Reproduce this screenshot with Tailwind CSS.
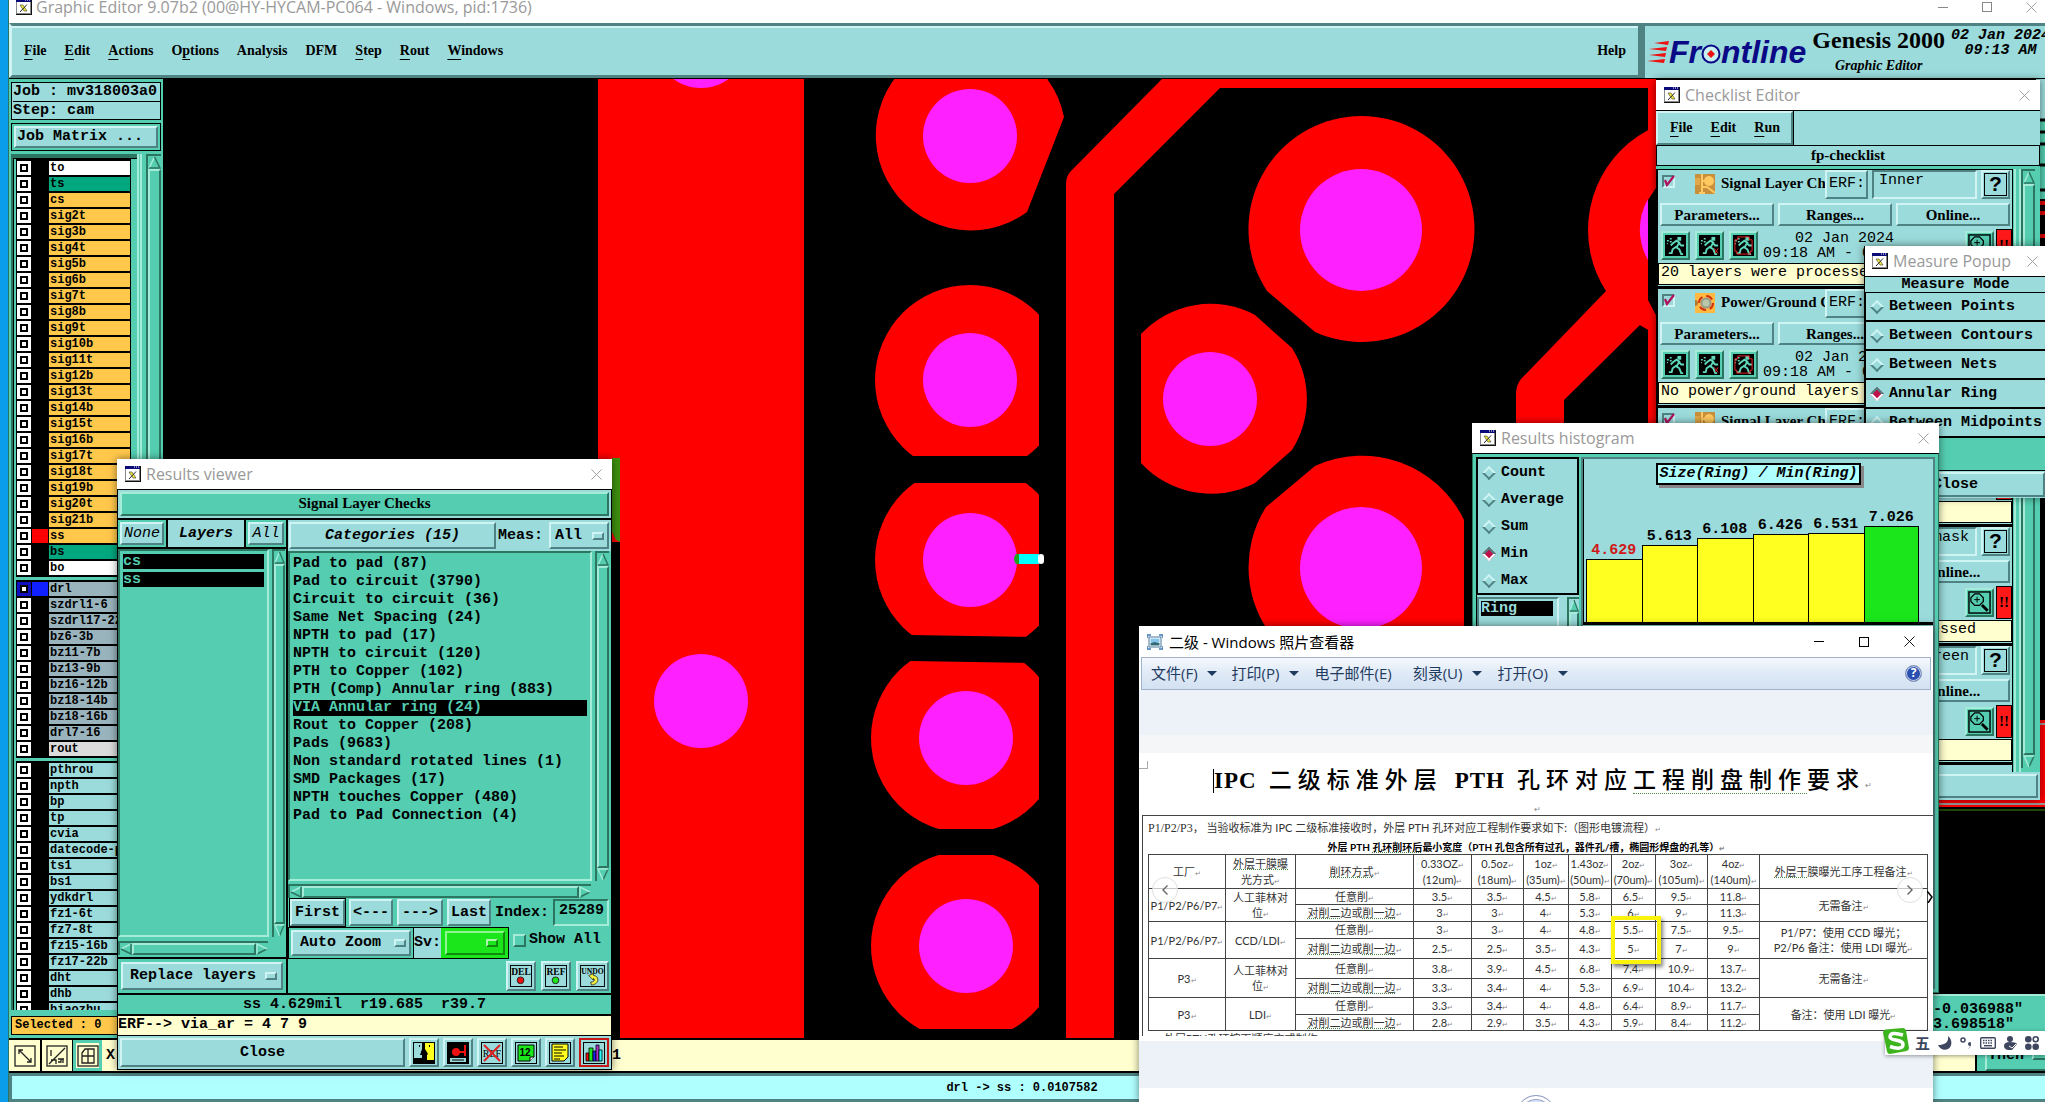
<!DOCTYPE html>
<html lang="zh-CN">
<head>
    <meta charset="UTF-8">
    <meta name="viewport" content="width=device-width, initial-scale=1.0">
    <title>Graphic Editor 9.07b2</title>
    <script src="https://cdn.jsdelivr.net/npm/@tailwindcss/browser@4"></script>
</head>
<body class="relative h-screen w-full overflow-hidden bg-[#0a9eea] text-black font-['Liberation_Mono','Noto_Sans_CJK_SC',monospace] text-[15px] leading-[18px]">

    <!-- Shared icons -->
    <svg class="hidden">
        <symbol id="x-app" viewBox="0 0 16 16">
            <rect width="16" height="16" fill="#111"/><rect x="0" y="0" width="15" height="15" fill="#888"/>
            <rect x="1" y="1" width="13" height="13" fill="#fff"/><rect x="0" y="0" width="15" height="3" fill="#0a0a78"/>
            <path d="M9 1h1M11 1h1M13 1h1" stroke="#fff"/>
            <path d="M4 6h3l4 6H8z" fill="#f5ee3a" stroke="#333" stroke-width=".6"/><path d="M11 5.500L4 13" stroke="#222"/>
        </symbol>
        <symbol id="close" viewBox="0 0 12 12"><path d="M.5.5l11 11M11.500.5l-11 11" stroke="currentColor" fill="none"/></symbol>
        <symbol id="runner" viewBox="0 0 22 22">
            <path d="M13 2h4v4h-4z" fill="#5fd8bb"/>
            <path d="M8 9l4-3 3 2-3 5 3 2 2 5h2M12 12l-4 3-1 4H4M14 8l3 3h3M9 8l-3 3" fill="none" stroke="#5fd8bb" stroke-width="2"/>
            <path d="M2 6h2M5 4h2M5 7h2M2 9h1" stroke="#5fd8bb" stroke-width="1.500"/>
        </symbol>
        <symbol id="magnify" viewBox="0 0 24 24">
            <rect x="1" y="1" width="22" height="22" fill="none" stroke="#000" stroke-width="1.500"/>
            <path d="M7 3h5l4 4v4l-4 4H7l-4-4V7z" fill="none" stroke="#000" stroke-width="1.300"/>
            <path d="M6.500 9h6M9.500 6v6" stroke="#000"/><path d="M14.500 14.500l6 6" stroke="#000" stroke-width="3"/>
        </symbol>
    </svg>

    <div class="ml-2 flex h-screen flex-col border-l border-[#2c7560]">
        <!-- Title bar -->
        <header class="flex h-[23px] shrink-0 items-center justify-between bg-white pb-[9px] pl-[7px] pr-[8px] text-[#999]">
            <div class="flex items-center gap-1">
                <svg class="size-4"><use href="#x-app"/></svg>
                <h1 class="whitespace-nowrap font-['Open_Sans',sans-serif] text-base leading-5">Graphic Editor 9.07b2 (00@HY-HYCAM-PC064 - Windows, pid:1736)</h1>
            </div>
            <div class="flex items-center gap-[34px]">
                <button aria-label="Minimize" class="h-px w-[10px] bg-[#888]"></button>
                <button aria-label="Maximize" class="size-[10px] border border-[#888]"></button>
                <button aria-label="Close"><svg class="size-[11px]"><use href="#close"/></svg></button>
            </div>
        </header>

        <!-- Menu bar -->
        <div class="flex h-14 shrink-0 border-b border-black bg-[#9bdbdb] font-['Liberation_Serif',serif] font-bold">
            <nav class="flex flex-1 items-center gap-[18px] border-[3px] border-b-[#4f8282] border-l-[#d0f4f4] border-r-[#4f8282] border-t-[#4f8282] px-[12px] text-sm shadow-[inset_0_2px_0_#d0f4f4]">
                <button><u class="underline-offset-4">F</u>ile</button>
                <button><u class="underline-offset-4">E</u>dit</button>
                <button><u class="underline-offset-4">A</u>ctions</button>
                <button>O<u class="underline-offset-4">p</u>tions</button>
                <button>Analysis</button>
                <button>DFM</button>
                <button><u class="underline-offset-4">S</u>tep</button>
                <button><u class="underline-offset-4">R</u>out</button>
                <button><u class="underline-offset-4">W</u>indows</button>
                <button class="ml-auto">Help</button>
            </nav>
            <div class="flex w-[404px] shrink-0 gap-[6px] overflow-hidden border-l-4 border-t-[3px] border-[#4f8282] pl-[2px]">
                <div class="flex h-full shrink-0 items-center">
                    <svg class="h-7 w-[22px]" viewBox="0 0 22 28">
                        <g fill="#e11"><path d="M7 5l15-2-1 4zM2 11l18-2-1 4zM2 17l17-2-1 4zM0 23l18-2-1 4z"/></g>
                    </svg>
                    <div class="flex items-center font-['Liberation_Sans',sans-serif] text-[32px] italic leading-8 text-[#0a0a86]" aria-label="Frontline">
                        <span>Fr</span>
                        <svg class="mt-1 size-5" viewBox="0 0 20 20"><circle cx="10" cy="10" r="8.500" fill="#c8f2f2" stroke="#0a0a86" stroke-width="2"/><path d="M10 6l4 4-4 4-4-4z" fill="#e11"/></svg>
                        <span>ntline</span>
                    </div>
                </div>
                <div class="shrink-0 text-center">
                    <div class="text-2xl leading-7">Genesis 2000</div>
                    <div class="pt-1 text-sm italic leading-4">Graphic Editor</div>
                </div>
                <div class="shrink-0 pt-[2px] text-center font-['Liberation_Mono',monospace] text-[15px] italic leading-[15px]">
                    <div>02 Jan 2024</div>
                    <div>09:13 AM</div>
                </div>
            </div>
        </div>

        <div class="flex min-h-0 flex-1">
            <!-- Layer list -->
            <aside class="flex w-[154px] shrink-0 flex-col overflow-hidden bg-[#54cdb0] px-[2px] pt-[3px] font-bold">
                <div class="shrink-0 border border-black bg-[#9bdbdb] pl-px text-[15px]">
                    <div class="whitespace-nowrap border-b border-black leading-[18px]">Job : mv318003a0</div>
                    <div class="leading-[17px]">Step: cam</div>
                </div>
                <div class="mt-[3px] shrink-0 border border-black p-[2px]">
                    <button class="w-full border-2 border-b-[#4f8282] border-l-[#d0f4f4] border-r-[#4f8282] border-t-[#d0f4f4] bg-[#9bdbdb] pl-px text-left leading-[18px]">Job Matrix ...</button>
                </div>
                <div class="mt-[3px] flex min-h-0 flex-1 justify-between">
                    <div class="min-h-0 flex-1 overflow-hidden border-l-2 border-t-4 border-[#2c7560]">
                        <div class="border-l border-t border-black pl-[2px]">
                            <div id="layers" class="w-[115px]"></div>
                        </div>
                    </div>
                    <div class="w-[5px] border-x-2 border-[#a5ecd8] bg-[#54cdb0]"></div>
                    <div data-vscroll class="ml-1 flex w-[15px] flex-col"></div>
                </div>
                <div class="mt-[6px] mb-[3px] h-[19px] shrink-0 border border-black bg-[#ffc84b] pl-[3px] text-[12px] leading-[17px]">Selected : 0</div>
            </aside>

            <!-- Board canvas -->
            <main class="relative min-w-0 flex-1 bg-black">
                <svg class="h-full w-full" viewBox="163 79 1882 959" preserveAspectRatio="xMinYMin slice">
                    <defs>
                        <clipPath id="p2"><rect x="860" y="280" width="179" height="176"/></clipPath>
                        <clipPath id="p3"><path d="M860 483H1039V637L910 635H860z"/></clipPath>
                        <clipPath id="p4"><path d="M860 661H911L1039 663V829H860z"/></clipPath>
                        <clipPath id="p5"><rect x="860" y="855" width="179" height="174"/></clipPath>
                    </defs>
                    <g fill="#f00">
                        <rect x="598" y="79" width="206" height="959"/>
                        <path d="M1064 117A95 95 0 1 0 1027 212z"/>
                        <circle cx="970" cy="380" r="95" clip-path="url(#p2)"/>
                        <circle cx="970" cy="560" r="95" clip-path="url(#p3)"/>
                        <circle cx="966" cy="738" r="95" clip-path="url(#p4)"/>
                        <circle cx="966" cy="946" r="95" clip-path="url(#p5)"/>
                        <path d="M1162 79L1071 171Q1066 176 1066 184V1038H1114V194L1220 88H1648V423H1656V79z"/>
                        <path d="M1267 291A113 113 0 1 1 1315 332z"/>
                        <path d="M1141 334A95 95 0 0 1 1255 315L1292 348A95 95 0 0 1 1292 450L1255 483A95 95 0 0 1 1141 463z"/>
                        <path d="M1315 466A113 113 0 0 1 1464 520V640H1275A113 113 0 0 1 1266 507z"/>
                        <circle cx="1701" cy="230" r="113"/>
                        <path d="M1606 291L1521 379Q1516 385 1516 394V430H1564V400L1640 325L1660 335V270z"/>
                    </g>
                    <path d="M1656 188L1648 200V300L1656 315z" fill="#000"/>
                    <g fill="#ff20ff">
                        <circle cx="701" cy="41" r="47"/><circle cx="701" cy="701" r="47"/>
                        <circle cx="970" cy="136" r="47"/><circle cx="970" cy="380" r="47"/>
                        <circle cx="970" cy="560" r="47"/><circle cx="966" cy="738" r="47"/>
                        <circle cx="966" cy="946" r="47"/><circle cx="1210" cy="399" r="47"/>
                        <circle cx="1361" cy="230" r="61"/><circle cx="1361" cy="568" r="61"/>
                        <path d="M1648 199A61 61 0 0 0 1648 260z"/>
                    </g>
                    <path d="M1016 554h6v10h-6q-4-5 0-10z" fill="#1fa31f"/>
                    <rect x="1019" y="554" width="20" height="10" fill="#0ff"/>
                    <rect x="1038" y="554" width="6" height="10" rx="3" fill="#fff"/>
                    <path d="M612 458h8v84l-4-2-4-8z" fill="#3f8f0f"/><path d="M604 542h16v496h-16z" fill="#000"/>
                    <rect x="2036" y="79" width="9" height="40" fill="#9bdbdb"/>
                    <rect x="2036" y="119" width="9" height="80" fill="#54cdb0"/>
                    <path d="M2036 120h9M2036 132h9M2036 144h9M2036 165h9M2036 190h9" stroke="#000" stroke-width="3"/>
                    <path d="M2036 203h9M2036 213h9M2036 236h9" stroke="#d00" stroke-width="4"/>
                    <rect x="1930" y="720" width="115" height="87" fill="#f00"/>
                    <path d="M1930 724h115M1930 804h115" stroke="#999" stroke-width="2"/>
                    <path d="M1930 810h115" stroke="#3f8f0f"/>
                </svg>
                <div class="absolute bottom-0 right-0 h-11 w-[120px] border-t-2 border-[#a5ecd8] bg-[#54cdb0] pt-[6px] pl-[8px] font-bold leading-[15px]">
                    <div>-0.036988"</div>
                    <div>3.698518"</div>
                </div>
            </main>
        </div>

        <!-- Bottom toolbar -->
        <div class="flex h-[35px] shrink-0 items-stretch border-y-2 border-black bg-[#ffffcf] font-bold">
            <button aria-label="Zoom box" class="flex w-[33px] items-center justify-center border-r-2 border-black">
                <svg class="size-6" viewBox="0 0 24 24" fill="none" stroke="#222" stroke-width="1.300"><rect x="2" y="2" width="20" height="20"/><path d="M6 6l12 12M6 10V6h4M18 14v4h-4"/></svg>
            </button>
            <button aria-label="Scale" class="flex w-[31px] items-center justify-center border-r border-black">
                <svg class="size-6" viewBox="0 0 24 24" fill="none" stroke="#222" stroke-width="1.300"><rect x="2" y="2" width="20" height="20"/><path d="M4 20L20 4M6 6v6M6 16h5v4M13 15h6M13 18h3v-3M18 15v4"/></svg>
            </button>
            <button aria-label="Grid" class="flex w-[29px] items-center justify-center border-[3px] border-[#54cdb0]">
                <svg class="size-6 shrink-0" viewBox="0 0 24 24" fill="none" stroke="#222" stroke-width="1.300"><rect x="2" y="2" width="20" height="20"/><path d="M6 9l3-4h9v14H6zM6 12h12M12 5v14"/></svg>
            </button>
            <label for="xin" class="self-center pl-1">X</label>
            <input id="xin" class="w-[506px] bg-transparent text-right" value="11">
            <div class="ml-auto flex">
                <div class="w-[10px] border-l-2 border-black bg-[#54cdb0]"></div>
                <button class="flex w-[60px] items-center gap-2 border-2 border-r-0 border-b-[#2c7560] border-l-[#a5ecd8] border-t-[#a5ecd8] bg-[#54cdb0] pl-px">Then <span class="h-2 w-4 shrink-0 border-2 border-b-[#2c7560] border-r-[#2c7560] border-l-[#a5ecd8] border-t-[#a5ecd8]"></span></button>
            </div>
        </div>
        <div class="h-[29px] shrink-0 border-[3px] border-r-0 border-t-[#4f8282] border-b-[#4f8282] border-l-[#4f8282] bg-[#b0ffff] pr-[13px] text-[12px] font-bold leading-6">
            <div class="text-center">drl -&gt; ss : 0.0107582</div>
        </div>
    </div>

    <!-- Checklist Editor -->
    <section class="absolute left-[1656px] top-20 flex h-[720px] w-96 flex-col bg-[#9bdbdb] shadow-[0_0_8px_rgba(0,0,0,0.5)]">
        <header class="flex h-[30px] shrink-0 items-center gap-[5px] bg-white pl-2 pr-[10px] text-[#999]">
            <svg class="size-4"><use href="#x-app"/></svg>
            <h2 class="flex-1 font-['Open_Sans',sans-serif] text-base leading-5">Checklist Editor</h2>
            <button aria-label="Close"><svg class="size-[11px]"><use href="#close"/></svg></button>
        </header>
        <div class="h-9 shrink-0 border-b border-t border-black font-['Liberation_Serif',serif] text-sm font-bold">
            <nav class="flex h-[34px] w-[137px] items-center gap-[18px] border-2 border-b-[#4f8282] border-l-[#d0f4f4] border-r-[#4f8282] border-t-[#d0f4f4] pl-3 shadow-[1px_0_0_#000]">
                <button><u class="underline-offset-4">F</u>ile</button>
                <button><u class="underline-offset-4">E</u>dit</button>
                <button><u class="underline-offset-4">R</u>un</button>
            </nav>
        </div>
        <div class="h-5 shrink-0 border border-t-0 border-black text-center font-['Liberation_Serif',serif] text-[15px] font-bold leading-[18px]">fp-checklist</div>
        <div class="flex min-h-0 flex-1 bg-[#54cdb0] pt-[3px]">
            <div id="checks" class="w-[357px] overflow-hidden border-l-2 border-r border-t border-black bg-[#9bdbdb]"></div>
            <div class="ml-px w-[7px] border-x-2 border-[#a5ecd8]"></div>
            <div data-vscroll class="mb-1 flex w-[14px] flex-col"></div>
        </div>
        <button class="m-[2px] h-6 shrink-0 border-2 border-b-[#4f8282] border-l-[#d0f4f4] border-r-[#4f8282] border-t-[#d0f4f4] font-bold" aria-label="Close checklist"></button>
    </section>

    <!-- Measure Popup -->
    <section class="absolute left-[1864px] top-[246px] w-[182px] border-l border-black bg-[#9bdbdb] font-bold shadow-[0_0_8px_rgba(0,0,0,0.5)]">
        <header class="flex h-[30px] items-center gap-[5px] bg-white pl-[7px] pr-2 font-normal text-[#999]">
            <svg class="size-4"><use href="#x-app"/></svg>
            <h2 class="flex-1 whitespace-nowrap font-['Open_Sans',sans-serif] text-base leading-5">Measure Popup</h2>
            <button aria-label="Close"><svg class="size-[11px]"><use href="#close"/></svg></button>
        </header>
        <div class="h-[17px] border-b border-t border-black text-center leading-4">Measure Mode</div>
        <div id="modes" class="border-l border-black"></div>
        <div class="h-8 bg-[#54cdb0]"></div>
        <div class="border-t border-black p-[1px]"><button class="h-[25px] w-full border-2 border-b-[#4f8282] border-l-[#d0f4f4] border-r-[#4f8282] border-t-[#d0f4f4]">Close</button></div>
    </section>

    <!-- Results histogram -->
    <section class="absolute left-[1472px] top-[423px] flex h-[570px] w-[467px] flex-col bg-[#54cdb0] shadow-[0_0_8px_rgba(0,0,0,0.5)]">
        <header class="flex h-[30px] shrink-0 items-center gap-[5px] bg-white pl-2 pr-[10px] text-[#999]">
            <svg class="size-4"><use href="#x-app"/></svg>
            <h2 class="flex-1 font-['Open_Sans',sans-serif] text-base leading-5">Results histogram</h2>
            <button aria-label="Close"><svg class="size-[11px]"><use href="#close"/></svg></button>
        </header>
        <div class="flex min-h-0 flex-1 gap-[2px] border border-t-black border-[#2c7560] p-[3px] font-bold">
            <div class="flex w-[103px] flex-col bg-[#9bdbdb]">
                <div id="stats" class="h-[138px] border-2 border-black"></div>
                <div class="flex flex-1 justify-between border-l border-black pt-[2px]">
                    <div class="w-[82px] border-2 border-b-[#d0f4f4] border-l-[#4f8282] border-r-[#d0f4f4] border-t-[#4f8282] p-[2px] pr-1">
                        <div class="h-[15px] bg-black text-[#9bdbdb] leading-[15px]">Ring</div>
                    </div>
                    <div data-vscroll class="flex w-3 flex-col"></div>
                </div>
            </div>
            <div class="flex-1 border-2 border-[#4f8282] bg-[#9bdbdb]">
                <div class="flex h-[166px] flex-col justify-between border-b-[3px] border-l border-black">
                    <div class="mx-auto mt-1 h-[22px] w-[205px] border-2 border-black bg-[#b0ffff] text-center italic shadow-[3px_3px_0_#888]">Size(Ring) / Min(Ring)</div>
                    <div id="bars" class="flex items-end pl-[2px] pr-[14px]"></div>
                </div>
            </div>
        </div>
    </section>

    <!-- Results viewer -->
    <section class="absolute left-[117px] top-[459px] w-[495px] bg-[#54cdb0] shadow-[0_0_8px_rgba(0,0,0,0.5)]">
        <header class="flex h-[30px] items-center gap-[5px] bg-white pl-2 pr-[10px] text-[#999]">
            <svg class="size-4"><use href="#x-app"/></svg>
            <h2 class="flex-1 font-['Open_Sans',sans-serif] text-base leading-5">Results viewer</h2>
            <button aria-label="Close"><svg class="size-[11px]"><use href="#close"/></svg></button>
        </header>
        <div class="border border-black">
            <div class="border-b-2 border-black bg-[#9bdbdb] p-[2px]">
                <div class="h-6 border-2 border-b-[#2c7560] border-l-[#a5ecd8] border-r-[#2c7560] border-t-[#a5ecd8] bg-[#54cdb0] text-center font-['Liberation_Serif',serif] text-[15px] font-bold leading-[18px]">Signal Layer Checks</div>
            </div>
            <div class="flex border-b-2 border-black">
                <div class="flex w-[170px] shrink-0 flex-col border-r-2 border-black">
                    <div class="flex h-[29px] items-stretch border-b-2 border-black italic">
                        <button class="m-[2px] w-11 border-2 border-b-[#4f8282] border-l-[#d0f4f4] border-r-[#4f8282] border-t-[#d0f4f4] bg-[#9bdbdb]">None</button>
                        <div class="flex-1 border-x-2 border-black bg-[#9bdbdb] text-center font-bold leading-[27px]">Layers</div>
                        <button class="m-[2px] w-9 border-2 border-b-[#4f8282] border-l-[#d0f4f4] border-r-[#4f8282] border-t-[#d0f4f4] bg-[#9bdbdb]">All</button>
                    </div>
                    <div class="flex h-[388px] justify-between pr-px">
                        <ul class="w-[151px] border-2 border-b-[#a5ecd8] border-l-[#2c7560] border-r-[#a5ecd8] border-t-[#2c7560] p-[3px] font-bold text-[#54cdb0]">
                            <li class="mb-[3px] h-[15px] bg-black leading-[15px]">cs</li>
                            <li class="h-[15px] bg-black leading-[15px]">ss</li>
                        </ul>
                        <div data-vscroll class="flex w-[13px] flex-col"></div>
                    </div>
                    <div data-hscroll class="mb-[2px] mt-1 flex h-[14px] w-[150px]"></div>
                    <div class="flex-1 border-t-2 border-black p-[3px]">
                        <div class="relative h-7">
                            <select aria-label="Replace layers" class="h-full w-full appearance-none border-2 border-b-[#4f8282] border-l-[#d0f4f4] border-r-[#4f8282] border-t-[#d0f4f4] bg-[#9bdbdb] pl-[7px] font-bold"><option>Replace layers</option></select>
                            <span class="pointer-events-none absolute right-[6px] top-[10px] h-2 w-3 border-2 border-b-[#4f8282] border-l-[#d0f4f4] border-r-[#4f8282] border-t-[#d0f4f4]"></span>
                        </div>
                    </div>
                </div>
                <div class="flex min-w-0 flex-1 flex-col font-bold">
                    <div class="flex h-[31px] items-center bg-[#9bdbdb] pl-px pr-[2px]">
                        <div class="h-[27px] w-[207px] border-2 border-b-[#4f8282] border-l-[#d0f4f4] border-r-[#4f8282] border-t-[#d0f4f4] text-center italic leading-[23px]">Categories (15)</div>
                        <label for="meas" class="pl-[2px]">Meas:</label>
                        <div class="relative ml-auto h-[27px] w-[60px]">
                            <select id="meas" class="h-full w-full appearance-none border-2 border-b-[#4f8282] border-l-[#d0f4f4] border-r-[#4f8282] border-t-[#d0f4f4] pl-1 font-bold"><option>All</option></select>
                            <span class="pointer-events-none absolute right-[5px] top-[10px] h-2 w-3 border-2 border-b-[#4f8282] border-l-[#d0f4f4] border-r-[#4f8282] border-t-[#d0f4f4]"></span>
                        </div>
                    </div>
                    <div class="flex h-[330px] justify-between pr-[2px]">
                        <ul id="categories" class="w-[304px] border-2 border-b-[#a5ecd8] border-l-[#2c7560] border-r-[#a5ecd8] border-t-[#2c7560] px-[3px] pt-[2px]"></ul>
                        <div data-vscroll class="flex w-[14px] flex-col"></div>
                    </div>
                    <div data-hscroll class="mb-px mt-[3px] flex h-[14px] w-[303px]"></div>
                    <div class="flex h-[27px] items-stretch gap-1 pl-[2px] pr-[2px]">
                        <button class="border-2 border-b-[#4f8282] border-l-[#d0f4f4] border-r-[#4f8282] border-t-[#d0f4f4] bg-[#9bdbdb] px-[3px] font-bold ring-1 ring-black">First</button>
                        <button class="border-2 border-b-[#4f8282] border-l-[#d0f4f4] border-r-[#4f8282] border-t-[#d0f4f4] bg-[#9bdbdb] px-[2px]">&lt;---</button>
                        <button class="border-2 border-b-[#4f8282] border-l-[#d0f4f4] border-r-[#4f8282] border-t-[#d0f4f4] bg-[#9bdbdb] px-[3px]">---&gt;</button>
                        <button class="border-2 border-b-[#4f8282] border-l-[#d0f4f4] border-r-[#4f8282] border-t-[#d0f4f4] bg-[#9bdbdb] px-[2px]">Last</button>
                        <label for="idx" class="self-center">Index:</label>
                        <input id="idx" class="min-w-0 flex-1 border-2 border-b-[#a5ecd8] border-l-[#2c7560] border-r-[#a5ecd8] border-t-[#2c7560] pb-1 pl-1" value="25289">
                    </div>
                    <div class="mt-px flex h-8 items-start">
                        <div class="flex h-8 border border-black">
                            <div class="relative m-[2px] w-[120px]">
                                <select aria-label="Zoom mode" class="h-full w-full appearance-none border-2 border-b-[#4f8282] border-l-[#d0f4f4] border-r-[#4f8282] border-t-[#d0f4f4] bg-[#9bdbdb] pl-[7px] font-bold"><option>Auto Zoom</option></select>
                                <span class="pointer-events-none absolute right-[5px] top-[9px] h-2 w-3 border-2 border-b-[#4f8282] border-l-[#d0f4f4] border-r-[#4f8282] border-t-[#d0f4f4]"></span>
                            </div>
                            <label for="sv" class="border-l border-black bg-[#9bdbdb] leading-[30px]">Sv:</label>
                            <div class="relative w-[67px] bg-[#1be61b] p-[3px] pl-1">
                                <select id="sv" class="h-full w-full appearance-none border-2 border-b-[#0f8a0f] border-l-[#8ff58f] border-r-[#0f8a0f] border-t-[#8ff58f]"><option></option></select>
                                <span class="pointer-events-none absolute right-[10px] top-[11px] h-2 w-3 border-2 border-b-[#0f8a0f] border-l-[#aff5af] border-r-[#0f8a0f] border-t-[#aff5af]"></span>
                            </div>
                        </div>
                        <label class="ml-1 flex items-center gap-[3px] whitespace-nowrap pt-1"><input type="checkbox" class="size-[13px] appearance-none border-2 border-b-[#2c7560] border-l-[#a5ecd8] border-r-[#2c7560] border-t-[#a5ecd8]">Show All</label>
                    </div>
                    <div class="flex h-[34px] items-center justify-end gap-[5px] pr-[2px]">
                        <button aria-label="DEL" class="border-2 border-b-[#4f8282] border-l-[#d0f4f4] border-r-[#4f8282] border-t-[#d0f4f4] bg-[#9bdbdb] p-[2px]">
                            <svg class="size-[22px]" viewBox="0 0 23 23"><rect x=".5" y=".5" width="22" height="22" fill="none" stroke="#000"/><text x="11.500" y="10" text-anchor="middle" font-size="10" font-family="Liberation Serif">DEL</text><circle cx="11" cy="16" r="3.500" fill="#e11" stroke="#222"/></svg>
                        </button>
                        <button aria-label="REF" class="border-2 border-b-[#4f8282] border-l-[#d0f4f4] border-r-[#4f8282] border-t-[#d0f4f4] bg-[#9bdbdb] p-[2px]">
                            <svg class="size-[22px]" viewBox="0 0 23 23"><rect x=".5" y=".5" width="22" height="22" fill="none" stroke="#000"/><text x="11.500" y="10" text-anchor="middle" font-size="10" font-family="Liberation Serif">REF</text><circle cx="11" cy="16" r="3.500" fill="#1be61b" stroke="#222"/></svg>
                        </button>
                        <button aria-label="UNDO" class="border-2 border-b-[#4f8282] border-l-[#d0f4f4] border-r-[#4f8282] border-t-[#d0f4f4] bg-[#9bdbdb] p-[2px]">
                            <svg class="h-[22px] w-[25px]" viewBox="0 0 26 23"><rect x=".5" y=".5" width="25" height="22" fill="none" stroke="#000"/><text x="13" y="9" text-anchor="middle" font-size="8" font-family="Liberation Serif">UNDO</text><path d="M9 11l5-2v2c6 0 7 9-2 10l-1-3c4 0 5-3 3-4v2z" fill="#f5ee3a" stroke="#222" stroke-width=".8"/></svg>
                        </button>
                    </div>
                </div>
            </div>
            <div class="h-[21px] whitespace-pre border-b-2 border-black text-center font-bold leading-[19px]">ss 4.629mil  r19.685  r39.7</div>
            <div class="h-5 border-b border-black bg-[#ffffcf] font-bold">ERF--&gt; via_ar = 4 7 9</div>
            <div class="flex h-[33px] items-stretch gap-1 bg-[#9bdbdb] p-[2px]">
                <button class="flex-1 border-2 border-b-[#4f8282] border-l-[#d0f4f4] border-r-[#4f8282] border-t-[#d0f4f4] font-bold">Close</button>
                <button aria-label="Compare" class="border-2 border-b-[#4f8282] border-l-[#d0f4f4] border-r-[#4f8282] border-t-[#d0f4f4] p-[2px]">
                    <svg class="size-[22px]" viewBox="0 0 22 22"><rect width="22" height="22"/><path d="M1 1h8v6l-2 6h2v3H1z" fill="#9bdbdb"/><path d="M12 1h9v17h-7v-5l1-1-3-5z" fill="#ffff20"/><path d="M6 4h1M16 4h1" stroke="#000" stroke-width="2"/></svg>
                </button>
                <button aria-label="Snapshot" class="border-2 border-b-[#4f8282] border-l-[#d0f4f4] border-r-[#4f8282] border-t-[#d0f4f4] p-[2px]">
                    <svg class="size-[22px]" viewBox="0 0 22 22"><rect width="22" height="22"/><path d="M3 16h16v4H3z" fill="#9bdbdb"/><path d="M5 18h12" stroke="#000"/><circle cx="9" cy="10" r="4" fill="#e11"/><path d="M12 10h5M18 3v11" stroke="#e11" stroke-width="2"/></svg>
                </button>
                <button aria-label="Remove reference" class="border-2 border-b-[#4f8282] border-l-[#d0f4f4] border-r-[#4f8282] border-t-[#d0f4f4] p-[2px]">
                    <svg class="size-[22px]" viewBox="0 0 22 22"><rect x=".5" y=".5" width="21" height="21" fill="none" stroke="#000"/><text x="11" y="15" text-anchor="middle" font-size="10" font-family="Liberation Serif">REF</text><path d="M3 3l16 16M19 3L3 19" stroke="#d22" stroke-width="2"/></svg>
                </button>
                <button aria-label="Numbers" class="border-2 border-b-[#4f8282] border-l-[#d0f4f4] border-r-[#4f8282] border-t-[#d0f4f4] p-[2px]">
                    <svg class="size-[22px]" viewBox="0 0 22 22"><rect x=".5" y=".5" width="21" height="21" fill="none" stroke="#000"/><path d="M3 3h16v12l-4 4H3z" fill="#1be61b" stroke="#000"/><path d="M15 19v-4h4" fill="#fff" stroke="#000"/><text x="10" y="14" text-anchor="middle" font-size="10" font-weight="bold" font-family="Liberation Sans">12</text></svg>
                </button>
                <button aria-label="Report" class="border-2 border-b-[#4f8282] border-l-[#d0f4f4] border-r-[#4f8282] border-t-[#d0f4f4] p-[2px]">
                    <svg class="size-[22px]" viewBox="0 0 22 22"><rect x=".5" y=".5" width="21" height="21" fill="none" stroke="#000"/><path d="M3 2h16v13l-4 4H3z" fill="#ffff20" stroke="#000"/><path d="M5 5h9M5 8h12M5 11h8M5 14h10M5 17h6" stroke="#000"/></svg>
                </button>
                <button aria-label="Histogram" class="border-2 border-[#c81818] p-[2px]">
                    <svg class="size-[22px]" viewBox="0 0 22 22"><rect x=".5" y=".5" width="21" height="21" fill="#9bdbdb" stroke="#000"/><g stroke="#000" stroke-width=".8"><path d="M3 11h3v8H3z" fill="#e11"/><path d="M6 6h4v13H6z" fill="#1be61b"/><path d="M10 9h3v10h-3z" fill="#22f"/><path d="M13 3h3v16h-3z" fill="#b030d0"/><path d="M16 8h3v11h-3z" fill="#2ff"/></g></svg>
                </button>
            </div>
        </div>
    </section>

    <!-- Photo viewer -->
    <section class="absolute bottom-0 left-[1139px] top-[626px] flex w-[794px] flex-col overflow-hidden bg-white font-['Open_Sans','Noto_Sans_CJK_SC',sans-serif] shadow-[0_0_8px_rgba(0,0,0,0.5)]">
        <header class="flex h-[31px] shrink-0 items-center gap-[6px] pl-2 pr-[18px]">
            <svg class="size-4" viewBox="0 0 16 16"><path d="M0 4V1h4M12 1h4v3M0 12v3h4M12 15h4v-3" fill="none" stroke="#3c7ab4" stroke-width="1.500"/><rect x="2" y="3" width="12" height="10" fill="#fff" stroke="#48759a"/><rect x="3.500" y="4.500" width="9" height="4" fill="#86c5ee"/><path d="M3.500 11.500V9l4-1 5 1v2.500z" fill="#2e6a78"/></svg>
            <h2 class="flex-1 text-[15px]">二级 - Windows 照片查看器</h2>
            <div class="flex items-center gap-[35px]">
                <button aria-label="Minimize" class="h-px w-[10px] bg-black"></button>
                <button aria-label="Maximize" class="size-[10px] border border-black"></button>
                <button aria-label="Close"><svg class="size-[11px]"><use href="#close"/></svg></button>
            </div>
        </header>
        <nav class="mx-[2px] flex h-[33px] shrink-0 items-center border border-[#9fb3cc] bg-linear-to-b from-[#f4f8fd] via-[#dfeaf6] to-[#d3e1f1] pb-px pl-[9px] pr-2 text-[15px] text-[#1f3a5f]">
            <button class="mr-[15px] flex items-center gap-[9px]">文件(F)<svg class="h-[5px] w-[10px]" viewBox="0 0 10 5"><path d="M0 0h10L5 5z" fill="#1f3a5f"/></svg></button>
            <button class="mr-[15px] flex items-center gap-[10px]">打印(P)<svg class="h-[5px] w-[10px]" viewBox="0 0 10 5"><path d="M0 0h10L5 5z" fill="#1f3a5f"/></svg></button>
            <button class="mr-[21px]">电子邮件(E)</button>
            <button class="mr-[15px] flex items-center gap-[10px]">刻录(U)<svg class="h-[5px] w-[10px]" viewBox="0 0 10 5"><path d="M0 0h10L5 5z" fill="#1f3a5f"/></svg></button>
            <button class="flex items-center gap-[10px]">打开(O)<svg class="h-[5px] w-[10px]" viewBox="0 0 10 5"><path d="M0 0h10L5 5z" fill="#1f3a5f"/></svg></button>
            <button class="ml-auto size-[17px] rounded-full border border-[#8898b8] bg-[#2a4fb0] text-[12px] font-bold leading-[14px] text-white shadow-[inset_0_0_0_1px_#c8d4ec]">?</button>
        </nav>
        <div class="h-[45px] shrink-0 bg-[#edf2f9]"></div>
        <div class="h-[18px] shrink-0 bg-[#f4f6f7]"></div>

        <div class="relative h-72 shrink-0 overflow-hidden bg-white pl-[3px] font-['Lato','Noto_Sans_CJK_SC',sans-serif] text-[11px] text-[#333]">
            <span class="absolute left-0 top-2 h-2 w-[9px] border-b border-r border-[#aaa]"></span>
            <h3 class="flex h-[50px] items-baseline justify-center gap-3 whitespace-nowrap pl-[10px] pt-[10px] text-[23px] font-bold leading-8 text-black">
                <span class="border-l border-black font-['Liberation_Serif',serif] tracking-[1px] leading-6">IPC</span>
                <span class="font-medium tracking-[6px]">二级标准外层</span>
                <span class="font-['Liberation_Serif',serif] tracking-[1px]">PTH</span>
                <span class="font-medium tracking-[6px]">孔环对应<span class="border-b border-dotted border-[#4a8a4a]">工程削盘制作</span>要求</span>
                <span class="-ml-3 text-[8px] font-normal text-[#888]">↵</span>
            </h3>
            <div class="h-3 text-center text-[8px] leading-3 text-[#888]">↵</div>
            <div class="border-l border-t border-[#444] pl-[5px] pr-1">
                <p class="whitespace-nowrap leading-6"><span class="font-['Liberation_Serif',serif] text-[12px]">P1/P2/P3</span>， 当验收标准为 IPC 二级标准接收时，外层 PTH 孔环对应工程制作要求如下:（图形电镀流程）<small class="text-[7px] text-[#888]">↵</small></p>
                <p class="h-[13px] pr-6 text-center text-[10px] font-bold leading-3 text-black">外层 PTH <u class="decoration-[#4a8a4a] decoration-dotted">孔环削环后</u>最小宽度（PTH 孔包含所有过孔，器件孔/槽，椭圆形焊盘的孔等）<small class="text-[7px] text-[#888]">↵</small></p>
                <table class="w-[780px] table-fixed border-collapse text-center leading-4">
                    <colgroup><col class="w-[77px]"><col class="w-[70px]"><col class="w-[118px]"><col class="w-[58px]"><col class="w-[52px]"><col class="w-[45px]"><col class="w-[43px]"><col class="w-[44px]"><col class="w-[52px]"><col class="w-[52px]"><col></colgroup>
                    <tbody id="spec"></tbody>
                </table>
                <p class="pl-4 text-[11px] leading-4">外层PTH孔环按下顺序方式制作</p>
            </div>
            <div class="absolute bottom-0 left-0 h-[5px] w-full bg-white"></div>
            <div class="absolute left-[472px] top-[163px] h-12 w-[50px] border-4 border-[#fbf30a] shadow-[2px_3px_4px_rgba(0,0,0,0.5)]"></div>
            <button aria-label="Previous" class="absolute left-[13px] top-[124px] flex size-[26px] items-center justify-center rounded-full border border-[#e0e0e0] bg-white/70">
                <svg class="h-[10px] w-[6px]" viewBox="0 0 6 10"><path d="M5.500.5L1 5l4.500 4.500" fill="none" stroke="#666" stroke-width="1.400"/></svg>
            </button>
            <button aria-label="Next" class="absolute left-[758px] top-[124px] flex size-[26px] items-center justify-center rounded-full border border-[#e0e0e0] bg-white/70">
                <svg class="h-[10px] w-[6px]" viewBox="0 0 6 10"><path d="M.5.5L5 5 .5 9.500" fill="none" stroke="#666" stroke-width="1.400"/></svg>
            </button>
            <svg class="absolute right-0 top-[138px] h-3 w-[6px]" viewBox="0 0 6 12"><path d="M0 0l5 6-4 6" fill="none" stroke="#000" stroke-width="1.500"/></svg>
        </div>
        <div class="h-[47px] shrink-0 bg-[#edf2f9]"></div>
        <div class="flex flex-1 justify-center bg-white pt-[7px]"><div class="size-10 shrink-0 rounded-full border border-[#8f9bc0] bg-[#dde4f6] shadow-[inset_0_0_0_3px_#fff,inset_0_0_0_4px_#8f9bc0]"></div></div>
    </section>

    <!-- Input method bar -->
    <div class="absolute left-[1885px] right-0 top-[1031px] flex h-6 items-center gap-2 bg-white pl-[30px] font-['Noto_Sans_CJK_SC',sans-serif] text-[15px] font-bold text-[#3f4660] shadow-[0_1px_4px_rgba(0,0,0,0.4)]">
        <svg class="absolute -left-[3px] -top-[4px] h-7 w-7" viewBox="0 0 28 28"><path d="M1 5.500Q1 3 3.500 2.500L21 1q2.500 0 3 2.500l3 17.500q0 2.500-2.500 3L8 27q-2.500 0-3-2.500z" fill="#3cb41e"/><path d="M21 8Q8 4 8 10c0 4 13 2 13 7.500C21 23 12 21 8 19.500" fill="none" stroke="#fff" stroke-width="3.500"/></svg>
        <button>五</button>
        <button aria-label="Moon"><svg class="size-[14px]" viewBox="0 0 14 14"><path d="M10 0c1 6-3 9-10 9 2 4 6 6 10 4s5-9 0-13z" fill="#3f4660"/></svg></button>
        <button aria-label="Punctuation"><svg class="h-[14px] w-3" viewBox="0 0 12 14"><circle cx="3" cy="4" r="2" fill="none" stroke="#3f4660" stroke-width="1.500"/><path d="M10 6a2 2 0 1 0 0 4c0 1-1 2-2 3 3-1 4-7 2-7z" fill="#3f4660"/></svg></button>
        <button aria-label="Keyboard"><svg class="h-3 w-4" viewBox="0 0 16 12"><rect x=".7" y=".7" width="14.600" height="10.600" rx="1" fill="none" stroke="#3f4660" stroke-width="1.400"/><path d="M3 3.500h10M3 6h10" stroke="#3f4660" stroke-width="1.400" stroke-dasharray="1.500 1"/><path d="M4 8.700h8" stroke="#3f4660" stroke-width="1.400"/></svg></button>
        <button aria-label="Account"><svg class="h-[14px] w-[13px]" viewBox="0 0 13 14"><circle cx="6" cy="3" r="3" fill="#3f4660"/><path d="M0 10q0-4 6-4 6 0 7 2l-5 6H4q-4-1-4-4z" fill="#3f4660"/><path d="M5 10l3 2 4-4" fill="none" stroke="#fff"/></svg></button>
        <button aria-label="Tools"><svg class="size-[14px]" viewBox="0 0 14 14" fill="#3f4660"><circle cx="3.300" cy="3.300" r="3.300"/><circle cx="10.700" cy="3.300" r="2.500" fill="none" stroke="#3f4660" stroke-width="1.600"/><circle cx="3.300" cy="10.700" r="3.300"/><circle cx="10.700" cy="10.700" r="3.300"/></svg></button>
    </div>

    <script>
        // Layer list, grouped the way the matrix is
        const orange = 'bg-[#ffc84b]', teal = 'bg-[#9bdbdb]', slate = 'bg-[#9ab4bd]';
        const groups = [
            [['to', 'bg-white'], ['ts', 'bg-[#00a77f]'], ['cs', orange],
             ...['2t','3b','4t','5b','6b','7t','8b','9t','10b','11t','12b','13t','14b','15t','16b','17t','18t','19b','20t','21b'].map(n => ['sig' + n, orange]),
             ['ss', orange, 'bg-[#f00]'], ['bs', 'bg-[#00a77f]'], ['bo', 'bg-white']],
            [['drl', slate, 'bg-[#1020ff]'], ...['szdrl1-6','szdrl17-22','bz6-3b','bz11-7b','bz13-9b','bz16-12b','bz18-14b','bz18-16b','drl7-16'].map(n => [n, slate]), ['rout', 'bg-[#dcdcdc]']],
            ['pthrou','npth','bp','tp','cvia','datecode-p','ts1','bs1','ydkdrl','fz1-6t','fz7-8t','fz15-16b','fz17-22b','dht','dhb','biaozhu'].map(n => [n, teal])
        ];
        document.getElementById('layers').innerHTML = groups.map(g =>
            '<div class="mb-[3px] border-t-[2px] border-black bg-black">' + g.map(([name, bg, mark]) => `
                <label class="flex h-4 items-start pl-px pr-px">
                    <input type="checkbox" class="size-[14px] shrink-0 appearance-none border-[3px] ${name === 'drl' ? 'border-[#1010c0]' : 'border-white'} bg-white shadow-[inset_0_0_0_2px_#000]">
                    <span class="mx-px h-[14px] w-4 shrink-0 ${mark || ''}"></span>
                    <span class="h-[14px] flex-1 overflow-hidden whitespace-nowrap ${bg} pl-px text-[12px] leading-[14px]">${name}</span>
                </label>`).join('') + '</div>').join('');

        // Result categories
        const categories = ['Pad to pad (87)', 'Pad to circuit (3790)', 'Circuit to circuit (36)', 'Same Net Spacing (24)', 'NPTH to pad (17)',
            'NPTH to circuit (120)', 'PTH to Copper (102)', 'PTH (Comp) Annular ring (883)', 'VIA Annular ring (24)', 'Rout to Copper (208)',
            'Pads (9683)', 'Non standard rotated lines (1)', 'SMD Packages (17)', 'NPTH touches Copper (480)', 'Pad to Pad Connection (4)'];
        document.getElementById('categories').innerHTML = categories.map((c, i) =>
            `<li class="h-[18px] py-px leading-4"><div class="${i === 8 ? 'bg-black text-[#54cdb0]' : ''}">${c}</div></li>`).join('');

        // Diamond radio buttons
        const radio = (group, label, on) =>
            `<input type="radio" name="${group}" ${on ? 'checked' : ''} class="mx-[3px] size-[10px] shrink-0 rotate-45 appearance-none border-2 ${on
                ? 'border-b-white border-l-[#4f8282] border-r-white border-t-[#4f8282] bg-[#c0104c]'
                : 'border-b-[#4f8282] border-l-[#d0f4f4] border-r-[#4f8282] border-t-[#d0f4f4]'}">${label}`;
        document.getElementById('modes').innerHTML = ['Between Points', 'Between Contours', 'Between Nets', 'Annular Ring', 'Between Midpoints'].map((m, i) =>
            `<label class="flex h-[29px] items-center gap-1 whitespace-nowrap border-b-2 border-black pl-[3px]">${radio('mode', m, i === 3)}</label>`).join('');
        document.getElementById('stats').innerHTML = ['Count', 'Average', 'Sum', 'Min', 'Max'].map((m, i) =>
            `<label class="flex h-[27px] items-center gap-1 pl-[3px]">${radio('stat', m, i === 3)}</label>`).join('');

        // Histogram: value, bar height
        document.getElementById('bars').innerHTML = [['4.629', 63], ['5.613', 77], ['6.108', 84], ['6.426', 88], ['6.531', 89], ['7.026', 96]].map(([v, h], i) => `
            <div class="flex-1 text-center leading-4 ${i === 0 ? 'text-[#d01818]' : ''}">${v}
                <div class="border border-b-0 border-black ${i === 5 ? 'bg-[#1be61b]' : 'border-r-0 bg-[#ffff20]'}" style="height:${h}px"></div>
            </div>`).join('');

        // Checklist entries
        const raised = 'border-2 border-b-[#4f8282] border-l-[#d0f4f4] border-r-[#4f8282] border-t-[#d0f4f4]';
        const greenRaised = 'border-2 border-b-[#2c7560] border-l-[#a5ecd8] border-r-[#2c7560] border-t-[#a5ecd8] bg-[#54cdb0]';
        const signalIcon = '<rect width="20" height="20" fill="#c8903a"/><circle cx="14" cy="7" r="5" fill="#ffc860"/><path d="M0 4h5v7H0z" fill="#e0a848"/><path d="M7 0v20M7 13h5l8 6M10 7H7M4 19h6" stroke="#ffc860" stroke-width="2" fill="none"/>';
        const powerIcon = '<rect width="20" height="20" fill="#ffb840"/><circle cx="11" cy="10" r="7" fill="none" stroke="#d03010" stroke-width="2" stroke-dasharray="7 4"/><circle cx="11" cy="10" r="4.500" fill="#b8c8a8" stroke="#998" stroke-width="2"/><circle cx="0" cy="10" r="3" fill="#b07a30"/>';
        const checks = [
            ['Signal Layer Checks', 'Inner', '20 layers were processed', signalIcon],
            ['Power/Ground Checks', 'Inner', 'No power/ground layers', powerIcon],
            ['Signal Layer Checks', 'Outer', '', signalIcon],
            ['Solder Mask Checks', 'Soldermask', '2 solder mask layers were processed', signalIcon],
            ['Silk Screen Checks', 'Silkscreen', '', signalIcon]
        ];
        document.getElementById('checks').innerHTML = checks.map(([name, erf, msg, icon], n) => `
            <div class="h-[119px] border-b-[3px] border-black">
                <div class="flex h-[30px] items-start pl-1">
                    <span class="relative mt-[5px] h-[13px] w-[13px] shrink-0 border-2 border-b-[#d0f4f4] border-l-[#4f8282] border-r-[#d0f4f4] border-t-[#4f8282]">
                        <input type="checkbox" checked id="chk${n}" class="absolute inset-0 appearance-none">
                        <svg class="absolute -left-px -top-[2px] h-3 w-3" viewBox="0 0 12 12"><path d="M2 5l2 5 7-9" fill="none" stroke="#b0105c" stroke-width="2.200"/></svg>
                    </span>
                    <svg class="ml-5 mt-1 size-5 shrink-0" viewBox="0 0 20 20">${icon}</svg>
                    <label for="chk${n}" class="ml-[6px] mt-1 w-[104px] shrink-0 overflow-hidden whitespace-nowrap font-['Liberation_Serif',serif] text-[15px] font-bold">${name}</label>
                    <label for="erf${n}" class="h-[29px] w-[43px] shrink-0 ${raised} pl-[2px] leading-6">ERF:</label>
                    <input id="erf${n}" class="ml-1 h-[29px] w-[105px] shrink-0 border-2 border-b-[#d0f4f4] border-l-[#4f8282] border-r-[#d0f4f4] border-t-[#4f8282] pb-[9px] pl-[5px]" value="${erf}">
                    <button aria-label="Help" class="ml-1 h-[29px] w-[29px] shrink-0 ${raised} p-px"><span class="block h-full border border-black font-['Liberation_Sans',sans-serif] text-[21px] font-bold leading-5">?</span></button>
                </div>
                <div class="mt-[3px] grid h-[23px] grid-cols-3 gap-1 pl-[2px] pr-[2px] font-['Liberation_Serif',serif] text-[15px] font-bold">
                    <button class="${raised} leading-[18px]">Parameters...</button>
                    <button class="${raised} leading-[18px]">Ranges...</button>
                    <button class="${raised} leading-[18px]">Online...</button>
                </div>
                <div class="mt-[3px] flex h-[33px] items-stretch pl-[3px]">
                    ${['', '<path d="M16 14l4 5M20 14l-3 5" stroke="#e22"/>', '<path d="M2 5h3V2h12v3h3v12h-2v3H4v-3H2z" fill="none" stroke="#e22"/>'].map(extra => `
                    <button aria-label="Run" class="mr-[5px] mt-[2px] h-[29px] w-[29px] shrink-0 ${greenRaised} p-[2px]"><svg class="size-[21px] bg-black" viewBox="0 0 22 22"><use href="#runner"/>${extra}</svg></button>`).join('')}
                    <div class="flex-1 overflow-hidden whitespace-nowrap pt-[2px] leading-[15px]"><div class="pl-8">02 Jan 2024</div><div>09:18 AM - 09:19 AM</div></div>
                    <button aria-label="Zoom" class="mt-[2px] h-[29px] w-[29px] shrink-0 ${greenRaised} p-px"><svg class="size-[23px]"><use href="#magnify"/></svg></button>
                    <div class="ml-[2px] w-4 border border-black bg-[#ff1818] text-center font-['Liberation_Serif',serif] font-bold leading-[30px]">!!</div>
                </div>
                <div class="mt-px h-[22px] whitespace-nowrap border border-black bg-[#ffffcf] pl-[2px] leading-[18px]">${msg}</div>
            </div>`).join('');

        // Motif scroll bars
        document.querySelectorAll('[data-vscroll]').forEach(el => {
            el.innerHTML = `<div class="flex min-h-0 flex-1 flex-col border-l-2 border-t-2 border-[#2c7560]">
                <svg class="h-[13px] w-full shrink-0" viewBox="0 0 12 13" preserveAspectRatio="none"><path d="M6 1L1 12h10z" fill="#54cdb0"/><path d="M6 1L1 12" stroke="#a5ecd8" stroke-width="1.500"/><path d="M6 1l5 11H1" fill="none" stroke="#2c7560" stroke-width="1.500"/></svg>
                <div class="flex-1 border-2 border-b-[#2c7560] border-l-[#a5ecd8] border-r-[#2c7560] border-t-[#a5ecd8]"></div>
                <svg class="h-[13px] w-full shrink-0" viewBox="0 0 12 13" preserveAspectRatio="none"><path d="M11 1L6 12" stroke="#2c7560" stroke-width="1.500"/><path d="M11 1H1l5 11" fill="none" stroke="#a5ecd8" stroke-width="1.500"/></svg>
            </div>`;
        });
        document.querySelectorAll('[data-hscroll]').forEach(el => {
            el.innerHTML = `<div class="flex flex-1 border-l-2 border-t-2 border-[#2c7560]">
                <svg class="h-full w-3 shrink-0" viewBox="0 0 12 12" preserveAspectRatio="none"><path d="M11 1L1 6" stroke="#a5ecd8" stroke-width="1.500"/><path d="M1 6l10 5V1" fill="none" stroke="#2c7560" stroke-width="1.500"/></svg>
                <div class="flex-1 border-2 border-b-[#2c7560] border-l-[#a5ecd8] border-r-[#2c7560] border-t-[#a5ecd8]"></div>
                <svg class="h-full w-3 shrink-0" viewBox="0 0 12 12" preserveAspectRatio="none"><path d="M11 6L1 11" stroke="#2c7560" stroke-width="1.500"/><path d="M11 6L1 1v10" fill="none" stroke="#a5ecd8" stroke-width="1.500"/></svg>
            </div>`;
        });

        // Annular ring requirements
        const mark = '<small class="text-[7px] leading-none text-[#888]">↵</small>';
        const green = t => `<u class="decoration-[#4a8a4a] decoration-dotted">${t}</u>`;
        const head = [['工厂'], [green('外层干膜曝') + '<br>光方式'], [green('削环方式')], ['0.33OZ', '(12um)'], ['0.5oz', '(18um)'], ['1oz', '(35um)'], ['1.43oz', '(50um)'],
            ['2oz', '(70um)'], ['3oz', '(105um)'], ['4oz', '(140um)'], [green('外层干') + '膜曝光工序工程备注']];
        const blocks = [
            ['P1/P2/P6/P7', '人工菲林对<br>位', '无需备注', ['h-4', 'h-[17px]'], ['3.5', '3.5', '4.5', '5.8', '6.5', '9.5', '11.8'], ['3', '3', '4', '5.3', '6', '9', '11.3']],
            ['P1/P2/P6/P7', 'CCD/LDI', 'P1/P7：使用 CCD 曝光；<br>P2/P6 备注：使用 LDI 曝光', ['h-[17px]', 'h-5'], ['3', '3', '4', '4.8', '5.5', '7.5', '9.5'], ['2.5', '2.5', '3.5', '4.3', '5', '7', '9']],
            ['P3', '人工菲林对<br>位', '无需备注', ['h-5', 'h-[19px]'], ['3.8', '3.9', '4.5', '6.8', '7.4', '10.9', '13.7'], ['3.3', '3.4', '4', '5.3', '6.9', '10.4', '13.2']],
            ['P3', 'LDI', '备注：使用 LDI 曝光', ['h-[17px]', 'h-4'], ['3.3', '3.4', '4', '4.8', '6.4', '8.9', '11.7'], ['2.8', '2.9', '3.5', '4.3', '5.9', '8.4', '11.2']]
        ];
        const cell = (t, span) => `<td ${span ? 'rowspan="2"' : ''} class="whitespace-nowrap border border-[#444] p-0 ${span ? 'leading-[15px]' : 'leading-3'}">${t}${mark}</td>`;
        document.getElementById('spec').innerHTML =
            '<tr class="h-[34px]">' + head.map(h => `<th class="whitespace-nowrap border border-[#444] p-0 font-normal leading-4">${h.join(mark + '<br>')}${mark}</th>`).join('') + '</tr>' +
            blocks.map(([plant, expo, note, hs, a, b]) =>
                `<tr class="${hs[0]}">${cell(plant, 1)}${cell(expo, 1)}${cell('任意削')}${a.map(v => cell(v)).join('')}${cell(note, 1)}</tr>
                 <tr class="${hs[1]}">${cell(green('对削二') + '边或' + green('削一边'))}${b.map(v => cell(v)).join('')}</tr>`).join('');
    </script>
</body>
</html>
